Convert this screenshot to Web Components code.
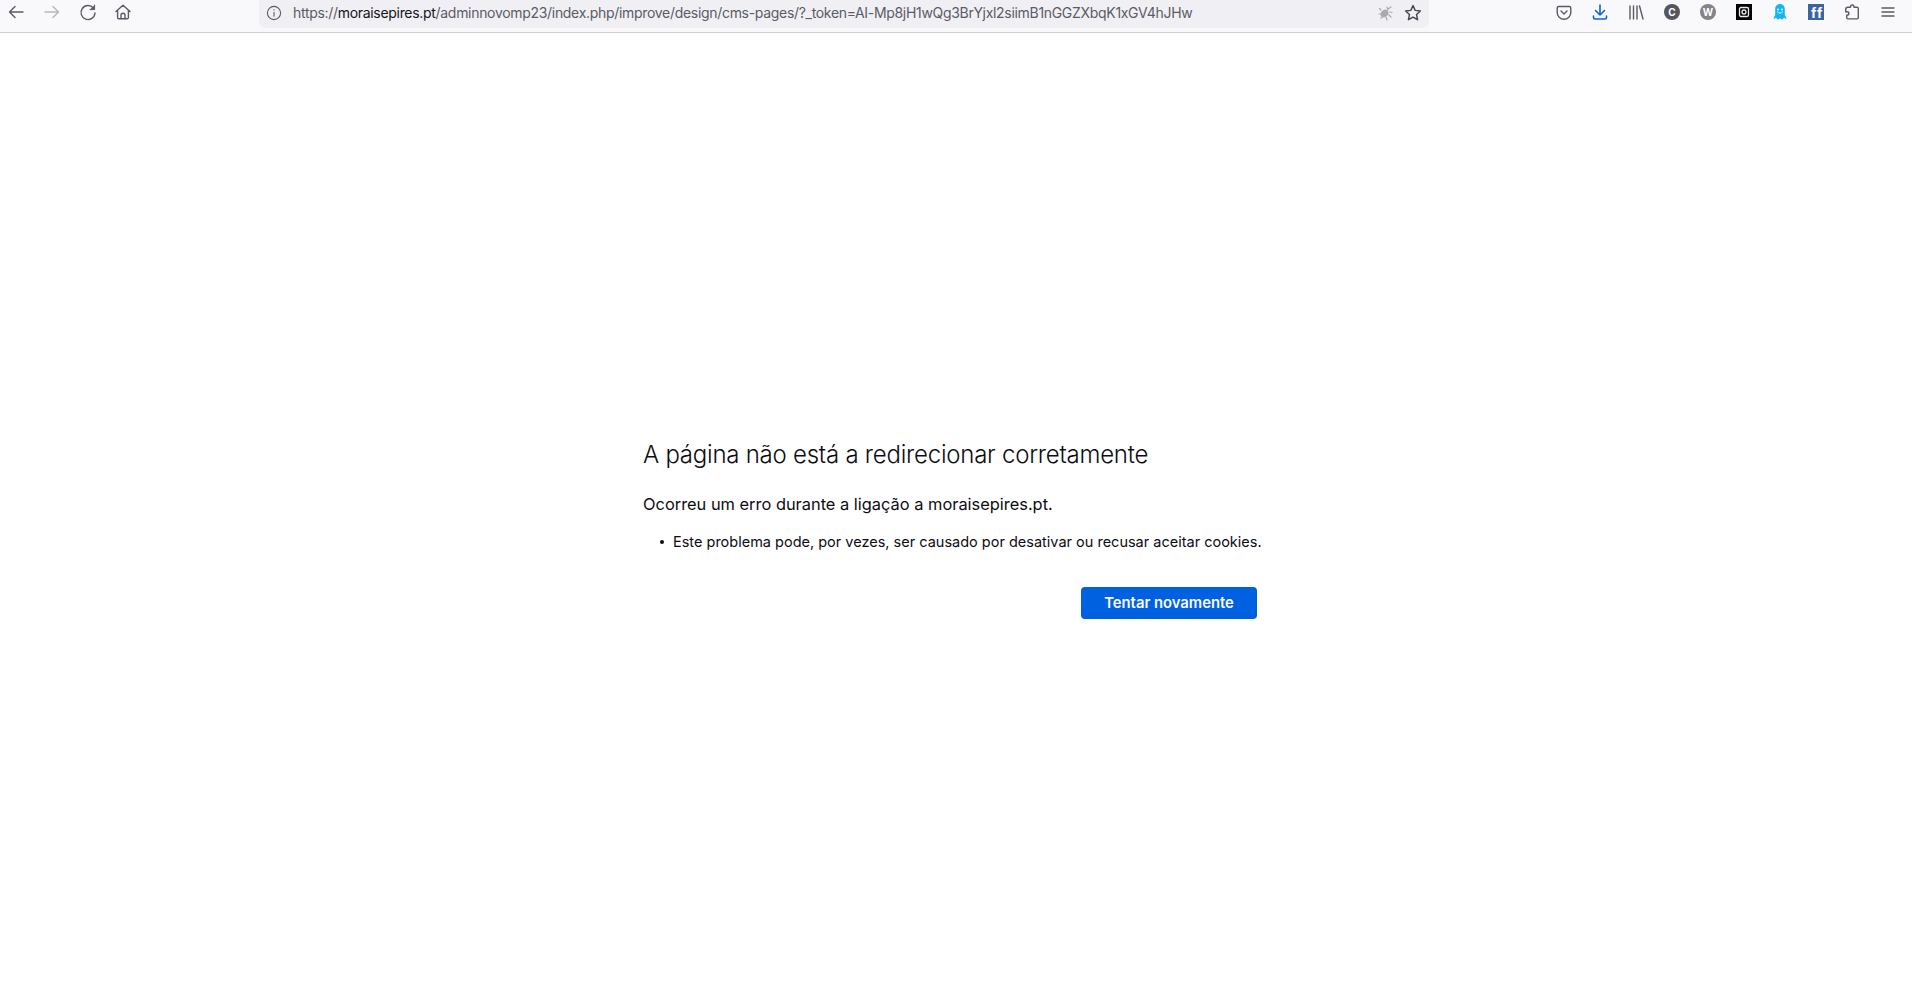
<!DOCTYPE html>
<html lang="pt"><head><meta charset="utf-8"><title>Erro</title>
<style>html,body{margin:0;padding:0;background:#fff;height:100%;font-family:Inter,"Liberation Sans",sans-serif;overflow:hidden}
body{display:flex;flex-direction:column}</style></head><body>
<browser-toolbar></browser-toolbar>
<error-page>
<span slot="title">A página não está a redirecionar corretamente</span>
<span slot="intro">Ocorreu um erro durante a ligação a moraisepires.pt.</span>
<li slot="items">Este problema pode, por vezes, ser causado por desativar ou recusar aceitar cookies.</li>
<span slot="action">Tentar novamente</span>
</error-page>
<template id="tb"><style>
:host{display:flex;height:32px;flex:none;background:#f9f9fb;border-bottom:1px solid #cfcfd3;box-sizing:content-box;align-items:flex-start;color:#5b5b66}
svg{display:block;fill:none;stroke:currentColor;stroke-width:1.4;stroke-linecap:round;stroke-linejoin:round}
.nav{display:flex;width:259px;flex:none;padding-left:8px;box-sizing:border-box;gap:19px;padding-top:4px}
.url{width:1170px;flex:none;height:28px;background:#f0f0f4;border-radius:0 0 6px 6px;display:flex;align-items:center;font-size:14px;color:#5b5b66;box-sizing:border-box;padding:0 0 3px 7px}
.url .t{margin-left:11px;white-space:nowrap;letter-spacing:-.022em;flex:1}.url b{font-weight:400;color:#15141a}
.tools{flex:1;display:flex;padding:4px 0 0 127px;gap:20px}
.tools>svg{flex:none}
.ff{flex:none;width:16px;height:16px;box-sizing:border-box;padding:1px 0 0 3px;background:#3a649f;color:#fff;font:700 15px/15px "Liberation Sans",sans-serif;letter-spacing:1px;white-space:nowrap}
</style>
<div class="nav">
<svg width="16" height="16" viewBox="0 0 16 16"><path d="M15 8H1.500M7 2.500 1.500 8 7 13.500"/></svg>
<svg width="16" height="16" viewBox="0 0 16 16" style="color:#b6b6bd;margin-left:1px"><path d="M1 8h13.500M9 2.500 14.500 8 9 13.500"/></svg>
<svg width="18" height="18" viewBox="0 0 18 18"><path d="M14.500 4.200A7 7 0 1 0 16 9"/><path d="M15.600 1v4.600H11" fill="currentColor" stroke-width="1"/></svg>
<svg width="16" height="16" viewBox="0 0 16 16" style="margin-left:-1px"><path d="M1 7.600 8 1.200l7 6.400M2.600 6.400v7.200c0 .8.500 1.200 1.200 1.200h8.400c.7 0 1.200-.4 1.200-1.200V6.400"/><path d="M6 14.600v-3.400c0-2.600 4-2.600 4 0v3.400"/></svg>
</div>
<div class="url">
<svg width="16" height="16" viewBox="0 0 16 16" style="stroke-width:1.100"><circle cx="8" cy="8" r="6.600"/><path d="M8 7.200v4M8 4.600v.4"/></svg>
<span class="t">https://<b>moraisepires.pt</b>/adminnovomp23/index.php/improve/design/cms-pages/?_token=AI-Mp8jH1wQg3BrYjxl2siimB1nGGZXbqK1xGV4hJHw</span>
<svg width="16" height="16" viewBox="0 0 16 16" style="color:#a9a9ae;margin-right:11px;stroke-width:1.200"><ellipse cx="7.500" cy="8.500" rx="3.600" ry="2.800" fill="currentColor" transform="rotate(-35 7.500 8.500)"/><path d="M11 4l3-2M10 2l1 3M13 7l2 .5M4 5 2.500 3.500M2 9h2M4 13l2-2M9 12l1 3M12 10l2 2"/></svg>
<svg width="18" height="18" viewBox="0 0 18 18" style="color:#45454f;margin-right:7px"><path d="m9 1.600 2.200 4.800 5.200.6-3.900 3.500 1.100 5.200L9 13.100l-4.600 2.600 1.100-5.200L1.600 7l5.200-.6z"/></svg>
</div>
<div class="tools">
<svg width="16" height="16" viewBox="0 0 16 16" style="margin-top:1px"><path d="M2.600 1.500h10.800c.9 0 1.400.6 1.400 1.400v4.600c0 3.600-3 6.800-6.800 6.800S1.200 11.100 1.200 7.500V2.900c0-.8.600-1.400 1.400-1.400z"/><path d="m5 6 3 3 3-3"/></svg>
<svg width="16" height="18" viewBox="0 0 16 18" style="color:#0a63e0;stroke-width:1.600;margin-top:-1px"><path d="M8 2v10M3.500 7.500 8 12l4.500-4.500M1.500 13v1.500c0 1 .6 1.500 1.500 1.500h10c.9 0 1.500-.5 1.500-1.500V13"/></svg>
<svg width="16" height="16" viewBox="0 0 16 16"><path d="M2 2v13M5.500 2v13M9 2v13M11.500 2 15 15"/></svg>
<dot-icon bg="#55555f">C</dot-icon>
<dot-icon bg="#838388">W</dot-icon>
<svg width="16" height="16" viewBox="0 0 16 16" style="background:#000;stroke:#e9e9e9;stroke-width:1.300"><rect x="3.500" y="3.500" width="9" height="9" rx="1.500"/><circle cx="8" cy="8" r="2"/></svg>
<svg width="16" height="16" viewBox="0 0 16 16" style="stroke:none;fill:#12b5f5"><path d="M8 0c3 0 4.800 2.400 4.800 5v6l1.700 3.200c.2.500-.2.800-.6.600l-1.900-1-1.900 2-2.100-1.600L5.900 15.800 4 13.800l-1.900 1c-.4.200-.8-.1-.6-.6L3.200 11V5C3.200 2.400 5 0 8 0z"/><circle cx="6" cy="5.400" r="1" fill="#fff"/><circle cx="10" cy="5.400" r="1" fill="#fff"/><path d="M5.500 8c1.500 1.600 3.500 1.600 5 0" fill="none" stroke="#fff" stroke-width="1"/></svg>
<div class="ff">ff</div>
<svg width="16" height="16" viewBox="0 0 16 16"><path d="M6.500 3.500V3c0-2.500 3.500-2.500 3.500 0v.5h3c.8 0 1.300.5 1.300 1.300v9c0 .8-.5 1.300-1.300 1.300H4c-.8 0-1.300-.5-1.300-1.300v-2.300H3c2.500 0 2.500-3.500 0-3.500H1.700V6c0-1.500.6-2.500 2-2.500z" transform="translate(0 -.2)"/></svg>
<svg width="16" height="16" viewBox="0 0 16 16"><path d="M2 4h12M2 8h12M2 12h12"/></svg>
</div></template>
<template id="dot"><style>:host{display:flex;flex:none;width:16px;height:16px;border-radius:50%;align-items:center;justify-content:center;color:#fff;font:700 10px Inter,"Liberation Sans",sans-serif}</style><slot></slot></template>
<template id="ep"><style>
:host{display:block;flex:1;color:#0d0c12;padding:404px 0 0 643px}
.box{width:614px}
h1{margin:0;font-size:24px;font-weight:300;line-height:36px;letter-spacing:-.01em;white-space:nowrap}
p{margin:20px 0 0;font-size:16.400px;line-height:22px}
ul{margin:16px 0 0;padding:0 0 0 30px;font-size:14.500px;line-height:22px;white-space:nowrap}
::slotted(li){display:flex;align-items:center;list-style:none;margin-left:-13px;gap:9px}
::slotted(li)::before{content:"";flex:none;width:4px;height:4px;border-radius:50%;background:currentColor}
.row{display:flex;justify-content:flex-end;margin-top:34px}
button{width:176px;height:32px;border:0;border-radius:4px;background:#0061e0;color:#fbfbfe;font:600 14.800px Inter,"Liberation Sans",sans-serif;padding:0}
</style><div class="box"><h1><slot name="title"></slot></h1><p><slot name="intro"></slot></p><ul><slot name="items"></slot></ul><div class="row"><button><slot name="action"></slot></button></div></div></template>
<script>
function reg(n,t,fn){customElements.define(n,class extends HTMLElement{constructor(){super();const s=this.attachShadow({mode:'open'});s.appendChild(document.getElementById(t).content.cloneNode(true))}connectedCallback(){if(fn)fn(this)}})}
reg('dot-icon','dot',e=>{e.style.background=e.getAttribute('bg')});
reg('browser-toolbar','tb');
reg('error-page','ep');
</script>
</body></html>
